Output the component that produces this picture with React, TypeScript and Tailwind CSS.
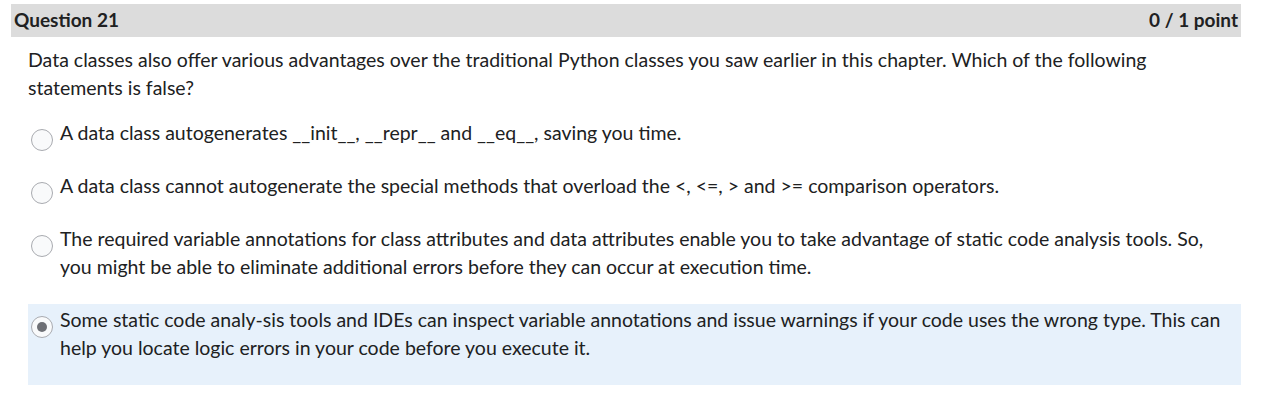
import React from "react";

const options = [
  { text: "A data class autogenerates __init__, __repr__ and __eq__, saving you time.", checked: false },
  { text: "A data class cannot autogenerate the special methods that overload the <, <=, > and >= comparison operators.", checked: false },
  {
    text: "The required variable annotations for class attributes and data attributes enable you to take advantage of static code analysis tools. So, you might be able to eliminate additional errors before they can occur at execution time.",
    checked: false,
  },
  {
    text: "Some static code analy-sis tools and IDEs can inspect variable annotations and issue warnings if your code uses the wrong type. This can help you locate logic errors in your code before you execute it.",
    checked: true,
  },
];

function Radio({ checked }: { checked: boolean }) {
  return (
    <div className="-mb-[6px] mt-[10px] flex h-[22px] w-[22px] shrink-0 items-center justify-center rounded-full border border-[#a9abb0] bg-[#f9fafb]">
      {checked && <div className="h-[10px] w-[10px] rounded-full bg-[#6e7075]" />}
    </div>
  );
}

export default function App() {
  return (
    <div className="min-h-[402px] bg-white pt-[4px] text-[#202122]" style={{ fontFamily: "Lato, 'Noto Sans', sans-serif" }}>
      <div className="ml-[11px] mr-[20px] flex h-[33px] items-center justify-between bg-[#dcdcdc] pl-[3px] pr-[3px]">
        <span className="text-[19px] font-bold">Question 21</span>
        <span className="text-[19px] font-bold">0 / 1 point</span>
      </div>
      <div className="ml-[28px] mr-[20px] mt-[9px]">
        <p className="pr-[10px] text-[19.5px] leading-[28px]">
          Data classes also offer various advantages over the traditional Python classes you saw earlier in this chapter. Which of the following statements is false?
        </p>
        <div className="mt-[15px] flex flex-col">
          {options.map((o, i) => (
            <div
              key={i}
              className={`flex items-start gap-[7px] pb-[23px] pl-[3px] pr-[10px] pt-[2px] ${o.checked ? "bg-[#e7f1fb]" : ""}`}
            >
              <Radio checked={o.checked} />
              <span className="text-[19.5px] leading-[28px]">{o.text}</span>
            </div>
          ))}
        </div>
      </div>
    </div>
  );
}
